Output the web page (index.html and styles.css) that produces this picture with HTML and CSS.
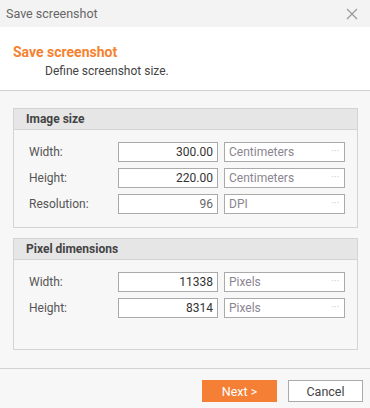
FILE: index.html
```html
<!DOCTYPE html>
<html>
<head>
<meta charset="utf-8">
<link rel="stylesheet" href="styles.css">
</head>
<body>
<div class="dialog">
  <div class="titlebar">
    <span class="title">Save screenshot</span>
    <svg class="close" width="12" height="12" viewBox="0 0 12 12"><path d="M1 1L11 11M11 1L1 11" stroke="#9a9a9a" stroke-width="1.3" fill="none"/></svg>
  </div>
  <div class="header">
    <div class="h-title">Save screenshot</div>
    <div class="h-desc">Define screenshot size.</div>
  </div>
  <div class="content">
    <div class="group g1">
      <div class="group-head">Image size</div>
      <div class="rows">
        <div class="row"><span class="label">Width:</span><div class="val">300.00</div><div class="unit">Centimeters<span class="dots">···</span></div></div>
        <div class="row"><span class="label">Height:</span><div class="val">220.00</div><div class="unit">Centimeters<span class="dots">···</span></div></div>
        <div class="row"><span class="label">Resolution:</span><div class="val dim">96</div><div class="unit">DPI<span class="dots">···</span></div></div>
      </div>
    </div>
    <div class="group g2">
      <div class="group-head">Pixel dimensions</div>
      <div class="rows">
        <div class="row"><span class="label">Width:</span><div class="val">11338</div><div class="unit">Pixels<span class="dots">···</span></div></div>
        <div class="row"><span class="label">Height:</span><div class="val">8314</div><div class="unit">Pixels<span class="dots">···</span></div></div>
      </div>
    </div>
  </div>
  <div class="footer">
    <button class="btn primary">Next &gt;</button>
    <button class="btn">Cancel</button>
  </div>
</div>
</body>
</html>
```
FILE: styles.css
```css
html, body { margin: 0; padding: 0; }
body {
  width: 370px;
  height: 408px;
  background: #f7f7f7;
  font-family: Roboto, "Noto Sans", sans-serif;
  font-size: 12px;
  color: #444;
  overflow: hidden;
}
.dialog { display: flex; flex-direction: column; height: 408px; }
.titlebar {
  height: 27px;
  background: #f3f3f3;
  display: flex;
  align-items: center;
  justify-content: space-between;
  padding: 0 12px 0 6px;
  flex-shrink: 0;
}
.title { color: #666; font-size: 12.5px; }
.close { display: block; }
.header {
  background: #fff;
  height: 64px;
  border-bottom: 1px solid #d2d2d2;
  box-sizing: border-box;
  padding: 16px 0 0 13px;
  flex-shrink: 0;
}
.h-title { color: #f5822f; font-weight: bold; font-size: 14px; line-height: 18px; }
.h-desc { color: #444; font-size: 12px; line-height: 16px; padding-left: 32px; margin-top: 2px; }
.content { padding: 17px 12px 0 13px; flex: 1; }
.group {
  border: 1px solid #d4d4d4;
  background: #f7f7f7;
}
.group + .group { margin-top: 10px; }
.group-head {
  background: #e6e6e6;
  border-bottom: 1px solid #d4d4d4;
  height: 20px;
  line-height: 20px;
  padding-left: 12px;
  font-weight: bold;
  color: #444;
  font-size: 12px;
}
.rows {
  display: flex;
  flex-direction: column;
  gap: 6px;
  padding: 12px 0 13px 15px;
}
.g2 .rows { padding-bottom: 31px; }
.row { display: flex; align-items: center; height: 20px; }
.label { width: 89px; color: #555; font-size: 12px; }
.val, .unit {
  box-sizing: border-box;
  height: 20px;
  border: 1px solid #aaa;
  background: #fff;
  line-height: 18px;
  font-size: 12px;
}
.val { width: 100px; text-align: right; padding-right: 4px; color: #333; }
.val.dim { color: #666; }
.unit {
  width: 121px;
  margin-left: 6px;
  padding-left: 4px;
  color: #8a8590;
  display: flex;
  justify-content: space-between;
}
.dots { color: #c8c8c8; font-size: 10px; padding-right: 5px; letter-spacing: 0; }
.footer {
  height: 40px;
  border-top: 1px solid #d2d2d2;
  box-sizing: border-box;
  display: flex;
  justify-content: flex-end;
  align-items: flex-start;
  gap: 11px;
  padding: 11px 7px 0 0;
  flex-shrink: 0;
}
.btn {
  width: 75px;
  height: 22px;
  border: 1px solid #aaa;
  background: #fff;
  color: #444;
  font-family: Roboto, "Noto Sans", sans-serif;
  font-size: 12.5px;
  padding: 0;
  margin: 0;
}
.btn.primary { background: #f47f35; border-color: #f47f35; color: #fff; }
```
